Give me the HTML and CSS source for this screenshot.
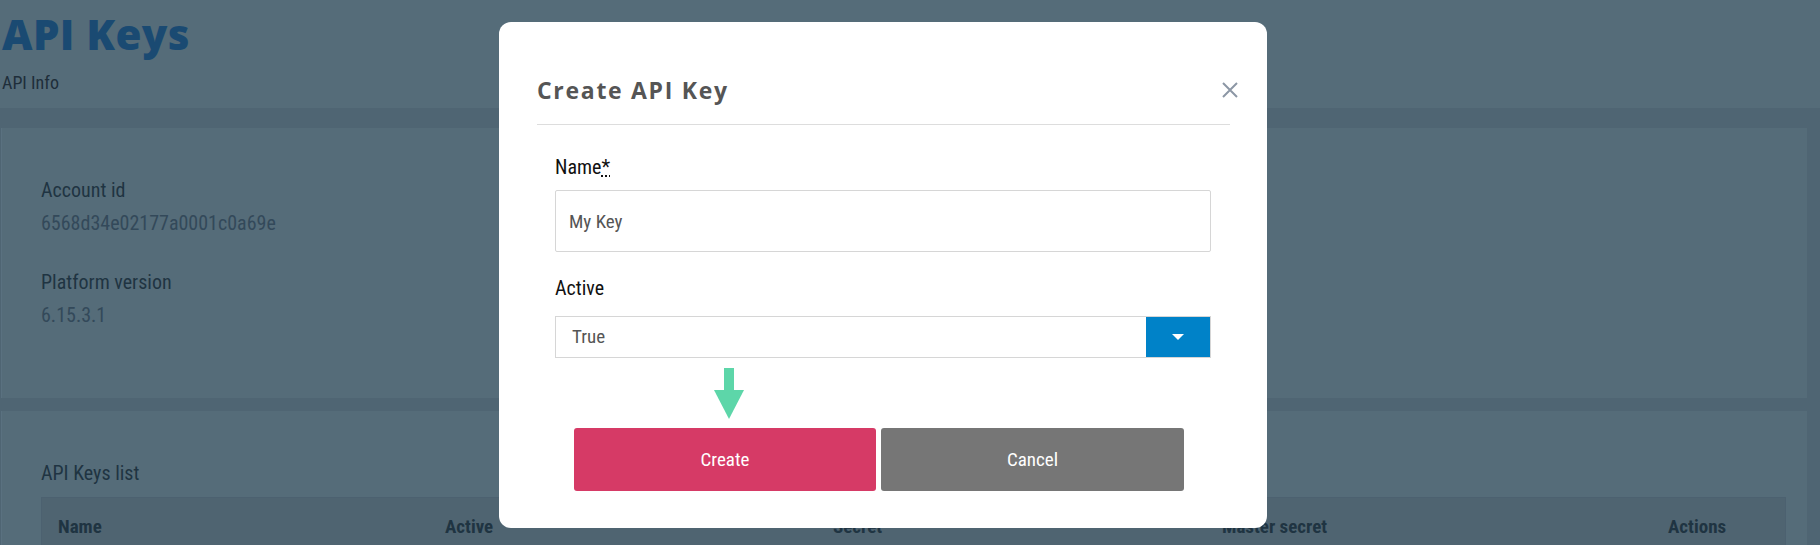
FILE: index.html
```html
<!DOCTYPE html>
<html lang="en">
<head>
  <meta charset="UTF-8">
  <meta name="viewport" content="width=device-width, initial-scale=1.0">
  <title>API Keys</title>
  <link rel="stylesheet" href="styles.css">
</head>
<body>
  <header class="page-head">
    <h1>API Keys</h1>
    <div class="subtitle">API Info</div>
  </header>

  <main class="page-body">
    <section class="card info-card">
      <div class="field-label">Account id</div>
      <div class="field-value">6568d34e02177a0001c0a69e</div>
      <div class="field-label spaced">Platform version</div>
      <div class="field-value">6.15.3.1</div>
    </section>

    <section class="card list-card">
      <div class="field-label">API Keys list</div>
      <div class="keys-table">
        <div class="th">Name</div>
        <div class="th">Active</div>
        <div class="th">Secret</div>
        <div class="th">Master secret</div>
        <div class="th">Actions</div>
      </div>
    </section>
  </main>

  <div class="modal-backdrop">
    <div class="modal">
      <div class="modal-head">
        <h2>Create API Key</h2>
        <button class="close-btn" aria-label="Close">
          <svg width="16" height="16" viewBox="0 0 16 16">
            <path d="M1 1 L15 15 M15 1 L1 15" stroke="#8c97a5" stroke-width="2" fill="none"/>
          </svg>
        </button>
      </div>

      <form class="modal-form">
        <label class="form-label" for="keyName">Name<abbr title="required">*</abbr></label>
        <input id="keyName" class="text-input" type="text" value="My Key">

        <label class="form-label active-label" for="keyActive">Active</label>
        <div class="select-box">
          <span class="select-value">True</span>
          <span class="select-toggle"><span class="caret"></span></span>
        </div>

        <div class="hint-arrow"></div>

        <div class="form-actions">
          <button type="button" class="btn btn-create">Create</button>
          <button type="button" class="btn btn-cancel">Cancel</button>
        </div>
      </form>
    </div>
  </div>
</body>
</html>
```

FILE: styles.css
```css
* { box-sizing: border-box; margin: 0; padding: 0; }
body {
  font-family: "Liberation Sans Narrow", "Roboto Condensed", "DejaVu Sans Condensed", sans-serif;
  background: #4f6573;
  color: #1f3442;
  height: 545px;
  overflow: hidden;
}
.page-head {
  background: #556c79;
  height: 108px;
  padding: 10px 2px 0;
}
.page-head h1 {
  font-family: "Open Sans", sans-serif;
  font-size: 42px;
  font-weight: 800;
  line-height: 48px;
  color: #1a4a72;
  letter-spacing: 0.4px;
}
.subtitle {
  margin-top: 14px;
  font-size: 18px;
  line-height: 22px;
  color: #1e2e3a;
}
.page-body {
  display: flex;
  flex-direction: column;
  gap: 13px;
  padding: 20px 13px 0 1px;
}
.card {
  background: #556c79;
  border-left: 1px solid #5a7180;
  padding: 50px 21px 0 39px;
}
.info-card {
  height: 270px;
}
.field-label {
  font-size: 20px;
  line-height: 24px;
  color: #1f3442;
}
.field-label.spaced { margin-top: 35px; }
.field-value {
  margin-top: 9px;
  font-size: 20px;
  line-height: 24px;
  color: #33495a;
}
.keys-table {
  margin-top: 12px;
  display: grid;
  grid-template-columns: 387px 388px 389px 446px 1fr;
  background: #4f6471;
  border: 1px solid #4c6170;
  height: 60px;
}
.th {
  padding: 17px 0 0 16px;
  font-size: 19px;
  font-weight: 700;
  color: #1f3442;
}

/* modal */
.modal-backdrop {
  position: fixed;
  top: 0; left: 0;
  width: 100vw;
  height: 100vh;
  display: flex;
  justify-content: center;
  align-items: flex-start;
  padding: 22px 54px 0 0;
}
.modal {
  width: 768px;
  height: 506px;
  background: white;
  border-radius: 12px;
  padding: 53px 37px 37px 38px;
}
.modal-head {
  display: flex;
  justify-content: space-between;
  align-items: center;
  padding-bottom: 19px;
  border-bottom: 1px solid #dddddd;
}
.modal-head h2 {
  font-family: "Open Sans", sans-serif;
  font-size: 23px;
  line-height: 30px;
  font-weight: 700;
  color: #555;
  letter-spacing: 1.7px;
}
.close-btn {
  background: none;
  border: none;
  margin-right: -8px;
  display: flex;
  cursor: pointer;
}
.modal-form {
  padding: 30px 19px 0 18px;
}
.form-label {
  display: block;
  font-size: 20px;
  line-height: 24px;
  color: #111;
}
.form-label abbr {
  text-decoration: underline dotted;
}
.text-input {
  display: block;
  width: 100%;
  height: 62px;
  margin-top: 11px;
  border: 1px solid #d6d6d6;
  border-radius: 2px;
  padding: 0 13px;
  font-family: inherit;
  font-size: 19px;
  color: #555;
  outline: none;
}
.active-label { margin-top: 24px; }
.select-box {
  display: flex;
  height: 42px;
  margin-top: 16px;
  border: 1px solid #d6d6d6;
}
.select-value {
  flex: 1;
  padding-left: 16px;
  font-size: 19px;
  line-height: 40px;
  color: #555;
}
.select-toggle {
  width: 64px;
  background: #0082c8;
  display: flex;
  justify-content: center;
  align-items: center;
}
.caret {
  border-left: 6px solid transparent;
  border-right: 6px solid transparent;
  border-top: 6px solid white;
}
.hint-arrow {
  position: relative;
  width: 30px;
  height: 51px;
  margin: 10px 0 9px 159px;
}
.hint-arrow::before {
  content: "";
  position: absolute;
  left: 10px;
  top: 0;
  width: 10px;
  height: 23px;
  background: #5dd6a9;
}
.hint-arrow::after {
  content: "";
  position: absolute;
  left: 0;
  top: 22px;
  border-left: 15px solid transparent;
  border-right: 15px solid transparent;
  border-top: 29px solid #5dd6a9;
}
.form-actions {
  display: grid;
  grid-template-columns: 302px 303px;
  gap: 5px;
  margin-left: 19px;
}
.btn {
  height: 63px;
  border: none;
  border-radius: 3px;
  color: white;
  font-family: inherit;
  font-size: 19px;
  cursor: pointer;
}
.btn-create { background: #d63a66; }
.btn-cancel { background: #767676; }
```
